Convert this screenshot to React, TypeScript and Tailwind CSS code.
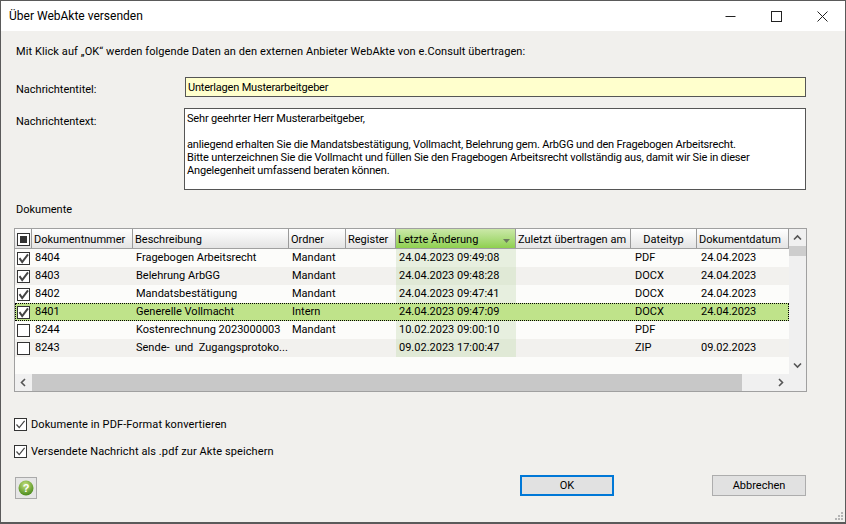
const font = "font-['Roboto','Liberation_Sans',sans-serif]";

function Check({ checked = true, size = "row" }: { checked?: boolean; size?: string }) {
  return (
    <svg width="13" height="13" viewBox="0 0 13 13" className="block shrink-0">
      <rect x="0.5" y="0.5" width="12" height="12" fill="#fff" stroke="#333" />
      {checked && (size === "row"
        ? <path d="M2.5 6.2 L5.2 10 L11 2.4" fill="none" stroke="#444" strokeWidth="2" />
        : <path d="M2.5 6.5 L5.2 9.6 L10.6 2.8" fill="none" stroke="#444" strokeWidth="1.2" />)}
    </svg>
  );
}

const rows = [
  ["8404", "Fragebogen Arbeitsrecht", "Mandant", "24.04.2023 09:49:08", "PDF", "24.04.2023", true],
  ["8403", "Belehrung ArbGG", "Mandant", "24.04.2023 09:48:28", "DOCX", "24.04.2023", true],
  ["8402", "Mandatsbestätigung", "Mandant", "24.04.2023 09:47:41", "DOCX", "24.04.2023", true],
  ["8401", "Generelle Vollmacht", "Intern", "24.04.2023 09:47:09", "DOCX", "24.04.2023", true],
  ["8244", "Kostenrechnung 2023000003", "Mandant", "10.02.2023 09:00:10", "PDF", "", false],
  ["8243", "Sende-  und  Zugangsprotoko...", "", "09.02.2023 17:00:47", "ZIP", "09.02.2023", false],
] as const;

function Head({ w, children, center }: { w: string; children?: React.ReactNode; center?: boolean }) {
  return (
    <div className={`${w} shrink-0 h-full flex items-center px-[2px] pt-[2px] border-r border-[#9a9a9a] bg-gradient-to-b from-white to-[#e4e4e4] whitespace-nowrap overflow-hidden ${center ? "justify-center" : ""}`}>
      {children}
    </div>
  );
}

function Row({ r, i }: { r: (typeof rows)[number]; i: number }) {
  const selected = i === 3;
  const alt = i % 2 === 1;
  const bg = selected ? "bg-[#bfe38a]" : alt ? "bg-[#f2f1ee]" : "bg-[#fcfcfa]";
  const sortBg = selected ? "" : alt ? "bg-[#e0e9d6]" : "bg-[#e7efdf]";
  return (
    <div className={`relative flex h-[18px] items-center whitespace-pre ${bg}`}>
      {selected && <div className="absolute inset-0 border border-dotted border-black pointer-events-none" />}
      <div className="w-[17px] shrink-0 flex justify-start pl-[2px]"><Check checked={r[6]} /></div>
      <div className="w-[101px] shrink-0 pl-[3px] pb-[2px]">{r[0]}</div>
      <div className="w-[156px] shrink-0 pl-[3px] pb-[2px]">{r[1]}</div>
      <div className="w-[57px] shrink-0 pl-[3px] pb-[2px]">{r[2]}</div>
      <div className="w-[50px] shrink-0" />
      <div className={`w-[120px] shrink-0 pl-[3px] pb-[2px] h-full flex items-center ${sortBg}`}>{r[3]}</div>
      <div className="w-[115px] shrink-0" />
      <div className="w-[66px] shrink-0 pl-[4px] pb-[2px]">{r[4]}</div>
      <div className="w-[92px] shrink-0 pl-[4px] pb-[2px]">{r[5]}</div>
    </div>
  );
}

function Chevron({ d }: { d: string }) {
  return (
    <svg width="9" height="9" viewBox="0 0 9 9" className="block">
      <path d={d} fill="none" stroke="#555" strokeWidth="1.6" />
    </svg>
  );
}

export default function App() {
  return (
    <div className={`${font} w-[846px] h-[524px] flex flex-col bg-[#f1f0ed] border border-b-2 border-[#5a5a5a] text-[11px] leading-none text-black overflow-hidden relative`}>
      <div className="h-[30px] shrink-0 bg-white flex items-center justify-between">
        <span className="pl-[8px] text-[12px]">Über WebAkte versenden</span>
        <div className="flex items-center">
          <div className="w-[46px] h-[30px] flex items-center justify-center">
            <svg width="11" height="11" viewBox="0 0 11 11"><path d="M0.5 5.5h10" stroke="#222" /></svg>
          </div>
          <div className="w-[46px] h-[30px] flex items-center justify-center">
            <svg width="11" height="11" viewBox="0 0 11 11"><rect x="0.5" y="0.5" width="10" height="10" fill="none" stroke="#222" /></svg>
          </div>
          <div className="w-[46px] h-[30px] flex items-center justify-center">
            <svg width="11" height="11" viewBox="0 0 11 11"><path d="M0.5 0.5L10.5 10.5M10.5 0.5L0.5 10.5" stroke="#222" /></svg>
          </div>
        </div>
      </div>

      <div className="flex-1 flex flex-col pl-[15px] pr-[38px]">
        <div className="mt-[13px] h-[14px] flex items-center whitespace-nowrap tracking-[0.09px]">Mit Klick auf „OK“ werden folgende Daten an den externen Anbieter WebAkte von e.Consult übertragen:</div>

        <div className="mt-[19px] flex items-start">
          <div className="w-[169px] pt-[7px]">Nachrichtentitel:</div>
          <div className="w-[621px] h-[20px] bg-[#ffffcd] border border-[#555] flex items-center pl-[2px] tracking-[-0.2px]">Unterlagen Musterarbeitgeber</div>
        </div>

        <div className="mt-[11px] flex items-start">
          <div className="w-[168px] pt-[8px]">Nachrichtentext:</div>
          <div className="w-[622px] h-[82px] bg-white border border-[#555] pl-[2px] pt-[3px] leading-[13px] whitespace-nowrap tracking-[-0.17px]">
            <div>Sehr geehrter Herr Musterarbeitgeber,</div>
            <div className="h-[13px]" />
            <div>anliegend erhalten Sie die Mandatsbestätigung, Vollmacht, Belehrung gem. ArbGG und den Fragebogen Arbeitsrecht.</div>
            <div>Bitte unterzeichnen Sie die Vollmacht und füllen Sie den Fragebogen Arbeitsrecht vollständig aus, damit wir Sie in dieser</div>
            <div>Angelegenheit umfassend beraten können.</div>
          </div>
        </div>

        <div className="mt-[12px] h-[14px] flex items-center">Dokumente</div>

        <div className="mt-[12px] ml-[-2px] w-[793px] h-[164px] border border-[#a0a0a0] bg-[#fcfcfa] flex flex-col">
          <div className="flex-1 flex min-h-0">
            <div className="w-[774px] shrink-0 flex flex-col">
              <div className="h-[20px] shrink-0 flex border-b border-[#a0a0a0]">
                <Head w="w-[17px]">
                  <svg width="13" height="13" viewBox="0 0 13 13" className="shrink-0"><rect x="0.5" y="0.5" width="12" height="12" fill="#fff" stroke="#333" /><rect x="3" y="3" width="7" height="7" fill="#333" /></svg>
                </Head>
                <Head w="w-[101px]">Dokumentnummer</Head>
                <Head w="w-[156px]">Beschreibung</Head>
                <Head w="w-[57px]">Ordner</Head>
                <Head w="w-[50px]">Register</Head>
                <div className="w-[120px] shrink-0 h-full flex items-center justify-between pl-[2px] pr-[5px] pt-[2px] border-r border-[#9a9a9a] bg-gradient-to-b from-[#cbe8a8] to-[#8fd04e]">
                  <span>Letzte Änderung</span>
                  <svg width="7" height="4" viewBox="0 0 7 4" className="mt-[2px]"><path d="M0 0h7L3.5 4z" fill="#6b7a5e" /></svg>
                </div>
                <Head w="w-[115px]">Zuletzt übertragen am</Head>
                <Head w="w-[66px]" center>Dateityp</Head>
                <Head w="w-[92px]">Dokumentdatum</Head>
              </div>
              {rows.map((r, i) => <Row key={r[0]} r={r} i={i} />)}
            </div>
            <div className="flex-1 bg-[#f0f0f0] flex flex-col items-center">
              <div className="h-[17px] flex items-center"><Chevron d="M1 6.5L4.5 3L8 6.5" /></div>
              <div className="w-full h-[10px] bg-[#cdcdcd]" />
              <div className="flex-1" />
              <div className="h-[17px] flex items-center"><Chevron d="M1 2.5L4.5 6L8 2.5" /></div>
            </div>
          </div>
          <div className="h-[17px] shrink-0 bg-[#f0f0f0] flex items-center">
            <div className="w-[17px] flex justify-center"><Chevron d="M6 1L2.5 4.5L6 8" /></div>
            <div className="w-[710px] h-full bg-[#c8c8c8]" />
            <div className="flex-1" />
            <div className="w-[17px] flex justify-center"><Chevron d="M3 1L6.5 4.5L3 8" /></div>
            <div className="w-[17px]" />
          </div>
        </div>

        <div className="mt-[25px] ml-[-2px] flex items-center gap-[4px] h-[14px] tracking-[0.1px]"><Check size="opt" /><span>Dokumente in PDF-Format konvertieren</span></div>
        <div className="mt-[13px] ml-[-2px] flex items-center gap-[4px] h-[14px] tracking-[0.1px]"><Check size="opt" /><span>Versendete Nachricht als .pdf zur Akte speichern</span></div>

        <div className="mt-[17px] flex items-start justify-between ml-[-1px] mr-[1px]">
          <div className="mt-[2px] w-[22px] h-[22px] border border-[#aaa] bg-[#e6e6e6] flex items-center justify-center">
            <svg width="16" height="16" viewBox="0 0 16 16">
              <defs>
                <radialGradient id="g" cx="45%" cy="30%" r="70%">
                  <stop offset="0" stopColor="#c7e27c" />
                  <stop offset="1" stopColor="#4a8a1c" />
                </radialGradient>
              </defs>
              <circle cx="8" cy="8" r="7.5" fill="url(#g)" />
              <text x="8" y="12" textAnchor="middle" fontSize="11" fontWeight="700" fill="#fff" fontFamily="Liberation Sans, sans-serif">?</text>
            </svg>
          </div>
          <div className="flex items-center gap-[98px]">
            <button className="w-[94px] h-[21px] border-2 border-[#0078d7] bg-[#e1e1e1] flex items-center justify-center">OK</button>
            <button className="w-[94px] h-[21px] border border-[#adadad] bg-[#e1e1e1] flex items-center justify-center">Abbrechen</button>
          </div>
        </div>
      </div>

      <svg width="10" height="10" viewBox="0 0 10 10" className="absolute right-[1px] bottom-[1px]">
        <g fill="#b5b5b5">
          <rect x="7" y="1" width="2" height="2" />
          <rect x="4" y="4" width="2" height="2" /><rect x="7" y="4" width="2" height="2" />
          <rect x="1" y="7" width="2" height="2" /><rect x="4" y="7" width="2" height="2" /><rect x="7" y="7" width="2" height="2" />
        </g>
      </svg>
    </div>
  );
}
